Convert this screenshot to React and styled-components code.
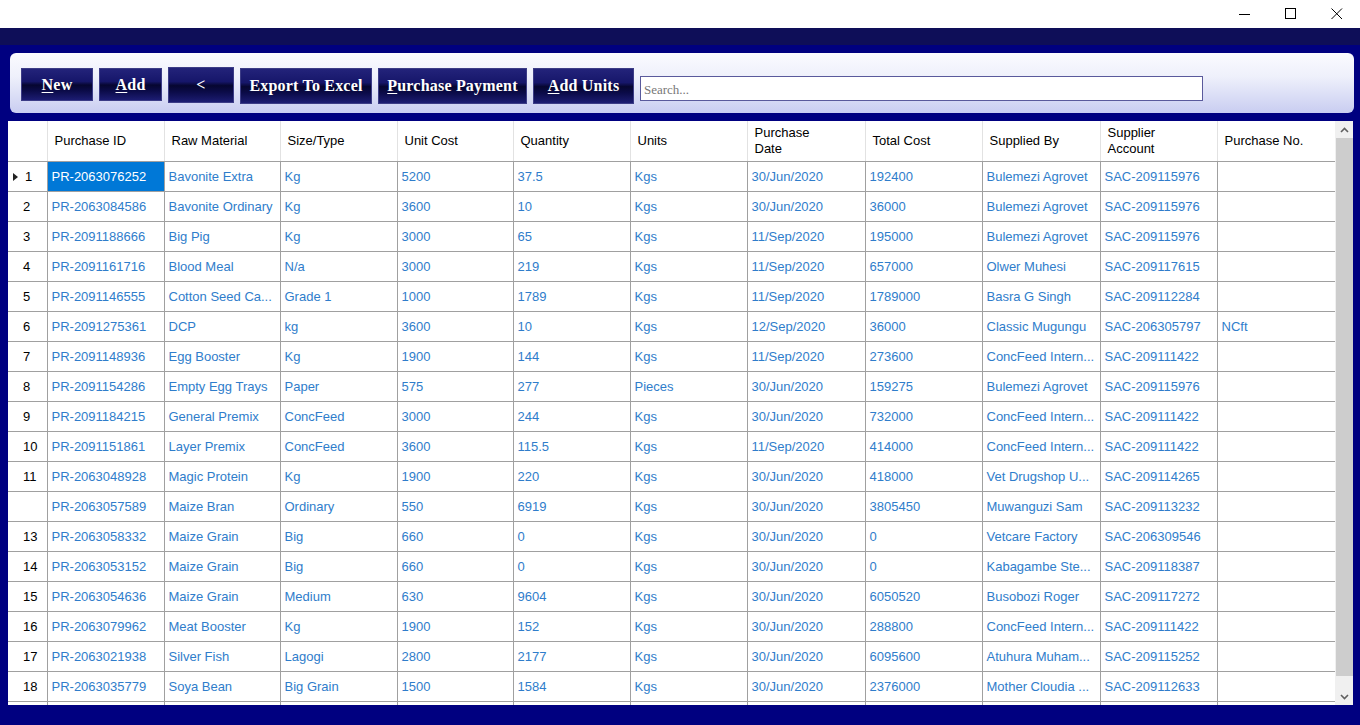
import React from 'react'
import styled, { createGlobalStyle } from 'styled-components'

const Global = createGlobalStyle`
  html, body { margin: 0; padding: 0; background: #fff; }
  body { font-family: "Liberation Sans", Arial, sans-serif; overflow: hidden; }
`

const Window = styled.div`
  width: 1360px;
  height: 725px;
  display: flex;
  flex-direction: column;
`

const TitleBar = styled.div`
  height: 28px;
  background: #fff;
  display: flex;
  justify-content: flex-end;
  align-items: center;
`

const WinBtn = styled.div`
  width: 46px;
  height: 28px;
  display: flex;
  align-items: center;
  justify-content: center;
`

const Body = styled.div`
  flex: 1;
  background: #000080;
  display: flex;
  flex-direction: column;
`

const TopBand = styled.div`
  height: 17px;
  background: #0e0e58;
`

const Panel = styled.div`
  margin: 8px 6px 0 10px;
  height: 60px;
  box-sizing: border-box;
  border-radius: 6px;
  background: linear-gradient(#fbfbff 0%, #eef0fb 40%, #c9cdf1 100%);
  display: flex;
  align-items: flex-start;
  gap: 6px;
  padding: 15px 0 0 11px;
`

const Btn = styled.button`
  height: ${p => (p.tall ? 36 : 33)}px;
  width: ${p => p.w}px;
  margin-top: ${p => (p.up ? -1 : 0)}px;
  box-sizing: border-box;
  border: 1px solid #3c3c86;
  background: linear-gradient(#23237a 0%, #16166a 40%, #060630 52%, #0b0b48 70%, #1c1c72 100%);
  color: #fff;
  font-family: "Liberation Serif", "Times New Roman", serif;
  font-weight: bold;
  font-size: 16px;
  letter-spacing: 0.2px;
  padding: 0;
  cursor: pointer;
  u { text-decoration: underline; text-underline-offset: 2px; }
`

const Search = styled.input`
  margin-top: 8px;
  width: 563px;
  height: 25px;
  box-sizing: border-box;
  border: 1px solid #5a5a9c;
  background: #fff;
  font-family: "Liberation Serif", serif;
  font-size: 13px;
  padding: 2px 3px 0;
  outline: none;
  &::placeholder { color: #777; }
`

const GridWrap = styled.div`
  margin: 8px 7px 0 8px;
  height: 584px;
  background: #fff;
  display: flex;
  overflow: hidden;
`

const TableBox = styled.div`
  flex: 1;
  overflow: hidden;
`

const Table = styled.table`
  border-collapse: collapse;
  table-layout: fixed;
  width: 1327px;
  font-size: 13px;
`

const HeadCell = styled.th`
  height: 40px;
  padding: 1px 0 0 7px;
  box-sizing: border-box;
  text-align: left;
  font-weight: normal;
  color: #000;
  line-height: 16px;
  border-right: 1px solid #e2e2e2;
  border-bottom: 1px solid #a0a0a0;
  vertical-align: middle;
`

const RowHead = styled.td`
  height: 30px;
  box-sizing: border-box;
  border-right: 1px solid #a0a0a0;
  border-bottom: 1px solid #a0a0a0;
  padding: 1px 0 0 15px;
  color: #000;
  white-space: nowrap;
  position: relative;
`

const Num = styled.span`
  margin-left: ${p => (p.first ? 2 : 0)}px;
`

const Arrow = styled.span`
  position: absolute;
  left: 5px;
  top: 11px;
  width: 0;
  height: 0;
  border-top: 4px solid transparent;
  border-bottom: 4px solid transparent;
  border-left: 5px solid #222;
`

const Cell = styled.td`
  height: 30px;
  box-sizing: border-box;
  padding: 1px 0 0 4px;
  border-right: 1px solid #a0a0a0;
  border-bottom: 1px solid #a0a0a0;
  color: ${p => (p.sel ? '#fff' : '#2f7dcb')};
  background: ${p => (p.sel ? '#0078d7' : '#fff')};
  white-space: nowrap;
  overflow: hidden;
`

const ScrollBar = styled.div`
  width: 18px;
  background: #f0f0f0;
  display: flex;
  flex-direction: column;
  align-items: center;
`

const ScrollArrow = styled.div`
  height: 17px;
  width: 100%;
  display: flex;
  align-items: center;
  justify-content: center;
`

const Thumb = styled.div`
  width: 17px;
  flex: 1;
  background: #cdcdcd;
  margin: 0 0 12px;
`

const widths = [39, 117, 116, 117, 116, 117, 117, 118, 117, 118, 117, 118]

const headers = [
  'Purchase ID', 'Raw Material', 'Size/Type', 'Unit Cost', 'Quantity', 'Units',
  ['Purchase', 'Date'], 'Total Cost', 'Supplied By', ['Supplier', 'Account'], 'Purchase No.',
]

const rows = [
  ['1', 'PR-2063076252', 'Bavonite Extra', 'Kg', '5200', '37.5', 'Kgs', '30/Jun/2020', '192400', 'Bulemezi Agrovet', 'SAC-209115976', ''],
  ['2', 'PR-2063084586', 'Bavonite Ordinary', 'Kg', '3600', '10', 'Kgs', '30/Jun/2020', '36000', 'Bulemezi Agrovet', 'SAC-209115976', ''],
  ['3', 'PR-2091188666', 'Big Pig', 'Kg', '3000', '65', 'Kgs', '11/Sep/2020', '195000', 'Bulemezi Agrovet', 'SAC-209115976', ''],
  ['4', 'PR-2091161716', 'Blood Meal', 'N/a', '3000', '219', 'Kgs', '11/Sep/2020', '657000', 'Olwer Muhesi', 'SAC-209117615', ''],
  ['5', 'PR-2091146555', 'Cotton Seed Ca...', 'Grade 1', '1000', '1789', 'Kgs', '11/Sep/2020', '1789000', 'Basra G Singh', 'SAC-209112284', ''],
  ['6', 'PR-2091275361', 'DCP', 'kg', '3600', '10', 'Kgs', '12/Sep/2020', '36000', 'Classic Mugungu', 'SAC-206305797', 'NCft'],
  ['7', 'PR-2091148936', 'Egg Booster', 'Kg', '1900', '144', 'Kgs', '11/Sep/2020', '273600', 'ConcFeed Intern...', 'SAC-209111422', ''],
  ['8', 'PR-2091154286', 'Empty Egg Trays', 'Paper', '575', '277', 'Pieces', '30/Jun/2020', '159275', 'Bulemezi Agrovet', 'SAC-209115976', ''],
  ['9', 'PR-2091184215', 'General Premix', 'ConcFeed', '3000', '244', 'Kgs', '30/Jun/2020', '732000', 'ConcFeed Intern...', 'SAC-209111422', ''],
  ['10', 'PR-2091151861', 'Layer Premix', 'ConcFeed', '3600', '115.5', 'Kgs', '11/Sep/2020', '414000', 'ConcFeed Intern...', 'SAC-209111422', ''],
  ['11', 'PR-2063048928', 'Magic Protein', 'Kg', '1900', '220', 'Kgs', '30/Jun/2020', '418000', 'Vet Drugshop U...', 'SAC-209114265', ''],
  ['', 'PR-2063057589', 'Maize Bran', 'Ordinary', '550', '6919', 'Kgs', '30/Jun/2020', '3805450', 'Muwanguzi Sam', 'SAC-209113232', ''],
  ['13', 'PR-2063058332', 'Maize Grain', 'Big', '660', '0', 'Kgs', '30/Jun/2020', '0', 'Vetcare Factory', 'SAC-206309546', ''],
  ['14', 'PR-2063053152', 'Maize Grain', 'Big', '660', '0', 'Kgs', '30/Jun/2020', '0', 'Kabagambe Ste...', 'SAC-209118387', ''],
  ['15', 'PR-2063054636', 'Maize Grain', 'Medium', '630', '9604', 'Kgs', '30/Jun/2020', '6050520', 'Busobozi Roger', 'SAC-209117272', ''],
  ['16', 'PR-2063079962', 'Meat Booster', 'Kg', '1900', '152', 'Kgs', '30/Jun/2020', '288800', 'ConcFeed Intern...', 'SAC-209111422', ''],
  ['17', 'PR-2063021938', 'Silver Fish', 'Lagogi', '2800', '2177', 'Kgs', '30/Jun/2020', '6095600', 'Atuhura Muham...', 'SAC-209115252', ''],
  ['18', 'PR-2063035779', 'Soya Bean', 'Big Grain', '1500', '1584', 'Kgs', '30/Jun/2020', '2376000', 'Mother  Cloudia ...', 'SAC-209112633', ''],
  ['', '', '', '', '', '', '', '', '', '', '', ''],
]

const Chevron = ({ up }) => (
  <svg width="9" height="6" viewBox="0 0 9 6">
    <path d={up ? 'M1 5 L4.5 1.5 L8 5' : 'M1 1 L4.5 4.5 L8 1'} fill="none" stroke="#606060" strokeWidth="1.6" />
  </svg>
)

export default function App() {
  return (
    <Window>
      <Global />
      <TitleBar>
        <WinBtn>
          <svg width="12" height="12" viewBox="0 0 12 12"><path d="M0 6.5 H11" stroke="#000" strokeWidth="1" /></svg>
        </WinBtn>
        <WinBtn>
          <svg width="12" height="12" viewBox="0 0 12 12"><rect x="0.5" y="0.5" width="10" height="10" fill="none" stroke="#000" strokeWidth="1" /></svg>
        </WinBtn>
        <WinBtn>
          <svg width="12" height="12" viewBox="0 0 12 12"><path d="M0.5 0.5 L11 11 M11 0.5 L0.5 11" stroke="#000" strokeWidth="1" /></svg>
        </WinBtn>
      </TitleBar>
      <Body>
        <TopBand />
        <Panel>
          <Btn w={72}><u>N</u>ew</Btn>
          <Btn w={63}><u>A</u>dd</Btn>
          <Btn w={66} tall up>&lt;</Btn>
          <Btn w={132} tall>Export To Excel</Btn>
          <Btn w={149} tall><u>P</u>urchase Payment</Btn>
          <Btn w={101} tall><u>A</u>dd Units</Btn>
          <Search placeholder="Search..." />
        </Panel>
        <GridWrap>
          <TableBox>
            <Table>
              <colgroup>
                {widths.map((w, i) => <col key={i} style={{ width: w }} />)}
              </colgroup>
              <thead>
                <tr>
                  <HeadCell />
                  {headers.map((h, i) => (
                    <HeadCell key={i}>
                      {Array.isArray(h) ? <>{h[0]}<br />{h[1]}</> : h}
                    </HeadCell>
                  ))}
                </tr>
              </thead>
              <tbody>
                {rows.map((r, ri) => (
                  <tr key={ri}>
                    <RowHead>
                      {ri === 0 && <Arrow />}
                      <Num first={ri === 0}>{r[0]}</Num>
                    </RowHead>
                    {r.slice(1).map((c, ci) => (
                      <Cell key={ci} sel={ri === 0 && ci === 0}>{c}</Cell>
                    ))}
                  </tr>
                ))}
              </tbody>
            </Table>
          </TableBox>
          <ScrollBar>
            <ScrollArrow><Chevron up /></ScrollArrow>
            <Thumb />
            <ScrollArrow><Chevron /></ScrollArrow>
          </ScrollBar>
        </GridWrap>
      </Body>
    </Window>
  )
}
